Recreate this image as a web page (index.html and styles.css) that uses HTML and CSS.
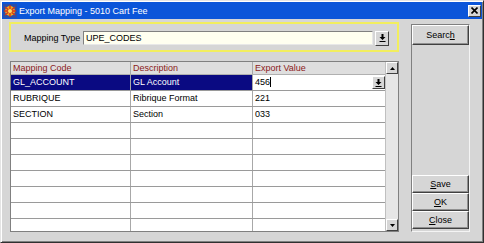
FILE: index.html
```html
<!DOCTYPE html>
<html lang="en">
<head>
    <meta charset="UTF-8">
    <title>Export Mapping - 5010 Cart Fee</title>
    <link rel="stylesheet" href="styles.css">
</head>
<body>
    <div class="window">
        <div class="titlebar">
            <svg class="app-icon" width="14" height="14" viewBox="0 0 14 14">
                <rect x="0" y="0" width="14" height="14" fill="#2b4fa8"/>
                <circle cx="7" cy="7" r="5" fill="#f2a81d"/>
                <path d="M2 3 L12 11 M2 11 L12 3 M7 1 V13 M1 7 H13" stroke="#d2361e" stroke-width="1.4"/>
                <circle cx="7" cy="7" r="2" fill="#ffe066"/>
            </svg>
            <span class="title">Export Mapping - 5010 Cart Fee</span>
            <div class="close-btn">
                <svg width="7" height="7" viewBox="0 0 7 7">
                    <path d="M0.5 0.5 L6.5 6.5 M6.5 0.5 L0.5 6.5" stroke="#000" stroke-width="1.6"/>
                </svg>
            </div>
        </div>

        <div class="content">
            <div class="main">
                <div class="filter">
                    <label class="filter-label">Mapping Type</label>
                    <div class="filter-input">UPE_CODES</div>
                    <div class="drop-btn">
                        <svg width="7" height="8" viewBox="0 0 7 8">
                            <path d="M2.5 0 H4.5 V3 H6.5 L3.5 6 L0.5 3 H2.5 Z" fill="#000"/>
                            <rect x="0.5" y="7" width="6" height="1" fill="#000"/>
                        </svg>
                    </div>
                </div>

                <div class="grid">
                    <div class="grid-body">
                        <div class="row header">
                            <div class="cell c1">Mapping Code</div>
                            <div class="cell c2">Description</div>
                            <div class="cell c3">Export Value</div>
                        </div>
                        <div class="row selected">
                            <div class="cell c1">GL_ACCOUNT</div>
                            <div class="cell c2">GL Account</div>
                            <div class="cell c3 editing">
                                <span>456<i class="caret"></i></span>
                                <div class="drop-btn small">
                                    <svg width="7" height="8" viewBox="0 0 7 8">
                                        <path d="M2.5 0 H4.5 V3 H6.5 L3.5 6 L0.5 3 H2.5 Z" fill="#000"/>
                                        <rect x="0.5" y="7" width="6" height="1" fill="#000"/>
                                    </svg>
                                </div>
                            </div>
                        </div>
                        <div class="row">
                            <div class="cell c1">RUBRIQUE</div>
                            <div class="cell c2">Ribrique Format</div>
                            <div class="cell c3">221</div>
                        </div>
                        <div class="row">
                            <div class="cell c1">SECTION</div>
                            <div class="cell c2">Section</div>
                            <div class="cell c3">033</div>
                        </div>
                        <div class="row"><div class="cell c1"></div><div class="cell c2"></div><div class="cell c3"></div></div>
                        <div class="row"><div class="cell c1"></div><div class="cell c2"></div><div class="cell c3"></div></div>
                        <div class="row"><div class="cell c1"></div><div class="cell c2"></div><div class="cell c3"></div></div>
                        <div class="row"><div class="cell c1"></div><div class="cell c2"></div><div class="cell c3"></div></div>
                        <div class="row"><div class="cell c1"></div><div class="cell c2"></div><div class="cell c3"></div></div>
                        <div class="row"><div class="cell c1"></div><div class="cell c2"></div><div class="cell c3"></div></div>
                        <div class="row"><div class="cell c1"></div><div class="cell c2"></div><div class="cell c3"></div></div>
                    </div>
                    <div class="scrollbar">
                        <div class="scroll-btn">
                            <svg width="5" height="3" viewBox="0 0 5 3"><path d="M0 3 L2.5 0 L5 3 Z" fill="#000"/></svg>
                        </div>
                        <div class="scroll-track"></div>
                        <div class="scroll-btn">
                            <svg width="5" height="3" viewBox="0 0 5 3"><path d="M0 0 L5 0 L2.5 3 Z" fill="#000"/></svg>
                        </div>
                    </div>
                </div>
            </div>

            <div class="side">
                <div class="btn tall">Searc<u>h</u></div>
                <div class="spacer"></div>
                <div class="btn"><u>S</u>ave</div>
                <div class="btn"><u>O</u>K</div>
                <div class="btn"><u>C</u>lose</div>
            </div>
        </div>
    </div>
</body>
</html>
```

FILE: styles.css
```css
body {
    margin: 0;
    font-family: "Liberation Sans", Arial, sans-serif;
    font-size: 9px;
    color: #000;
}
.window {
    width: 484px;
    height: 243px;
    box-sizing: border-box;
    background-color: #d6d6d6;
    border: 1px solid;
    border-color: #e4e4e4 #303030 #303030 #e4e4e4;
    box-shadow: inset 1px 1px #ffffff, inset -1px -1px #808080;
    padding: 1px;
}
.titlebar {
    height: 17px;
    background-color: #0b55d9;
    display: flex;
    align-items: center;
    padding-left: 1px;
}
.app-icon {
    margin-right: 2px;
}
.title {
    color: #fff;
    flex: 1;
    font-size: 9px;
}
.close-btn {
    width: 13px;
    height: 12px;
    box-sizing: border-box;
    background-color: #d6d6d6;
    border: 1px solid;
    border-color: #fff #404040 #404040 #fff;
    display: flex;
    align-items: center;
    justify-content: center;
    margin-right: 1px;
}
.content {
    display: flex;
    padding: 3px 0 0 7px;
}
.main {
    width: 390px;
}
.filter {
    height: 30px;
    box-sizing: border-box;
    border: 2px solid #f2ee5e;
    display: flex;
    align-items: center;
    padding: 2px 8px 0 13px;
}
.filter-label {
    width: 59px;
}
.filter-input {
    width: 290px;
    height: 14px;
    box-sizing: border-box;
    background-color: #fffff0;
    border: 1px solid;
    border-color: #808080 #e8e8e8 #e8e8e8 #808080;
    padding-left: 2px;
    line-height: 12px;
    margin-right: 2px;
}
.drop-btn {
    width: 14px;
    height: 15px;
    box-sizing: border-box;
    background-color: #d6d6d6;
    border: 1px solid;
    border-color: #fff #404040 #404040 #fff;
    display: flex;
    align-items: center;
    justify-content: center;
}
.drop-btn.small {
    height: 13px;
    width: 13px;
}
.grid {
    margin: 9px 0 0 1px;
    width: 389px;
    height: 171px;
    box-sizing: border-box;
    border: 1px solid #808080;
    display: flex;
    background-color: #fff;
}
.grid-body {
    flex: 1;
    overflow: hidden;
}
.row {
    display: flex;
    height: 16px;
    box-sizing: border-box;
    border-bottom: 1px solid #9a9a9a;
}
.row.header {
    height: 13px;
    background-color: #dedede;
    color: #8b1a1a;
    border-bottom: 1px solid #b0b0b0;
}
.cell {
    box-sizing: border-box;
    padding-left: 2px;
    line-height: 15px;
    white-space: nowrap;
    overflow: hidden;
    border-right: 1px solid #a8a8a8;
}
.header .cell {
    line-height: 12px;
}
.c1 {
    width: 120px;
}
.c2 {
    width: 122px;
}
.c3 {
    flex: 1;
    border-right: none;
}
.selected .c1,
.selected .c2 {
    background-color: #0a0a82;
    color: #fff;
}
.editing {
    display: flex;
    align-items: center;
    justify-content: space-between;
    padding-right: 0;
}
.caret {
    display: inline-block;
    width: 1px;
    height: 10px;
    background-color: #000;
    vertical-align: -2px;
}
.scrollbar {
    width: 12px;
    display: flex;
    flex-direction: column;
    background-color: #e6e6e6;
    border-left: 1px solid #c0c0c0;
}
.scroll-btn {
    height: 12px;
    box-sizing: border-box;
    background-color: #d6d6d6;
    border: 1px solid;
    border-color: #fff #404040 #404040 #fff;
    display: flex;
    align-items: center;
    justify-content: center;
}
.scroll-track {
    flex: 1;
}
.side {
    width: 59px;
    height: 208px;
    box-sizing: border-box;
    margin: 2px 0 0 12px;
    border: 1px solid;
    border-color: #808080 #f4f4f4 #f4f4f4 #808080;
    display: flex;
    flex-direction: column;
    padding-bottom: 2px;
}
.spacer {
    flex: 1;
}
.btn {
    height: 18px;
    box-sizing: border-box;
    border: 1px solid;
    border-color: #fff #404040 #404040 #fff;
    box-shadow: inset -1px -1px #909090;
    display: flex;
    align-items: center;
    justify-content: center;
    background-color: #d6d6d6;
}
.btn.tall {
    height: 20px;
}
```
